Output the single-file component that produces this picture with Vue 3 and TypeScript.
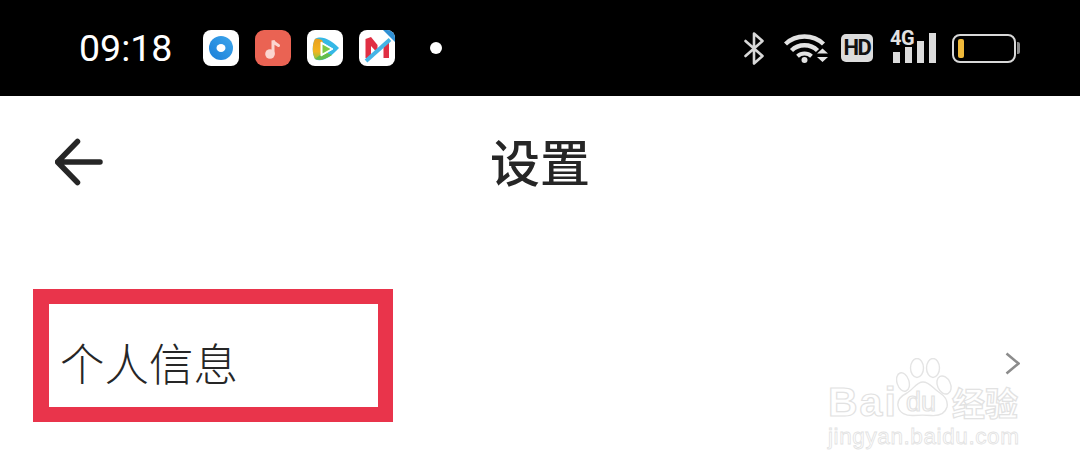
<script setup lang="ts">
const pageTitle = '设置';
const rowLabel = '个人信息';
</script>

<template>
  <div class="page">
    <div class="status-bar">
      <span class="status-bar__time">09:18</span>
      <div class="status-bar__apps">
        <svg class="app-icon" viewBox="0 0 36 36">
          <defs>
            <linearGradient id="disc" x1="0" y1="1" x2="1" y2="0">
              <stop offset="0" stop-color="#1a7ed8" />
              <stop offset="1" stop-color="#3da6ec" />
            </linearGradient>
          </defs>
          <rect width="36" height="36" rx="8" fill="#fff" />
          <circle cx="18" cy="18" r="12" fill="url(#disc)" />
          <ellipse cx="18" cy="18" rx="4.500" ry="4" fill="#fff" />
        </svg>
        <svg class="app-icon" viewBox="0 0 36 36">
          <rect width="36" height="36" rx="9" fill="#ea6353" />
          <circle cx="15" cy="24" r="4.800" fill="#fbd5cf" />
          <path d="M18 24V10.500c1 3 3.500 3.500 5.500 5" fill="none" stroke="#fbd5cf" stroke-width="3" stroke-linecap="round" />
        </svg>
        <svg class="app-icon" viewBox="0 0 36 36">
          <defs>
            <linearGradient id="wing" x1="0" y1="0" x2="0" y2="1">
              <stop offset="0" stop-color="#e8a020" />
              <stop offset="0.6" stop-color="#f3b41f" />
              <stop offset="1" stop-color="#8cc63f" />
            </linearGradient>
          </defs>
          <rect width="36" height="36" rx="8" fill="#fff" />
          <path d="M8 9C15 5 24 10 32 18 25 26 15 33 8 29 5 23 5 15 8 9z" fill="#35b8e6" />
          <path d="M8 9C5 15 5 23 8 29 13 31 18 29 22 26L15 10C12 9 9 8.500 8 9z" fill="url(#wing)" />
          <path d="M8 29C13 31 19 29 25 25L17 22z" fill="#63bd4b" />
          <path d="M14 12 26 19 14 26z" fill="#fff" stroke="#fff" stroke-width="1" stroke-linejoin="round" />
          <path d="M15.500 14.500 23.500 19 15.500 23.500z" fill="#7ccc46" />
        </svg>
        <svg class="app-icon" viewBox="0 0 36 36">
          <rect width="36" height="36" rx="8" fill="#fff" />
          <path d="M6.500 9 12 7 18.500 15 18.500 23 12 16V28H6.500zM23 16 30 9V28H24.500V17z" fill="#e02f43" />
          <path d="M7 31 31 9.500" stroke="#45b5e6" stroke-width="4" />
          <path d="M24 0h4a8 8 0 0 1 8 8v4z" fill="#2e8fd4" />
        </svg>
      </div>
      <span class="status-bar__dot"></span>
      <div class="status-bar__system">
        <svg class="icon-bluetooth" viewBox="0 0 21 33">
          <path d="M1.500 9 18.500 24 10 31.500V1.500L18.500 9 1.500 24" fill="none" stroke="#d8d8d8" stroke-width="2.600" stroke-linejoin="round" stroke-linecap="round" />
        </svg>
        <svg class="icon-wifi" viewBox="0 0 45 30">
          <path d="M1.500 11C12 1 29 1 39.500 11" fill="none" stroke="#e2e2e2" stroke-width="4.400" />
          <path d="M7.500 17.500C14.500 10.500 26.500 10.500 33.500 17.500" fill="none" stroke="#e2e2e2" stroke-width="4.400" />
          <path d="M13.500 23.200C17.500 19.500 23.500 19.500 27.500 23.200" fill="none" stroke="#e2e2e2" stroke-width="4" />
          <circle cx="20.500" cy="27" r="3" fill="#e2e2e2" />
          <path d="M33 20.500 38.500 15.500 44 20.500zM33 24 38.500 29 44 24z" fill="#e2e2e2" />
        </svg>
        <span class="status-bar__hd">HD</span>
        <div class="signal">
          <span class="signal__label">4G</span>
          <span class="signal__bar signal__bar--1"></span>
          <span class="signal__bar signal__bar--2"></span>
          <span class="signal__bar signal__bar--3"></span>
          <span class="signal__bar signal__bar--4"></span>
        </div>
        <div class="battery">
          <div class="battery__body"><span class="battery__level"></span></div>
          <span class="battery__nub"></span>
        </div>
      </div>
    </div>

    <header class="title-bar">
      <svg class="title-bar__back" viewBox="0 0 48 48">
        <path d="M45 24H4M22.500 3.500 2.500 24l20 20.500" fill="none" stroke="#262626" stroke-width="5.500" stroke-linecap="round" stroke-linejoin="round" />
      </svg>
      <h1 class="title-bar__text">{{ pageTitle }}</h1>
    </header>

    <div class="settings-row">
      <span class="settings-row__label">{{ rowLabel }}</span>
      <svg class="settings-row__chevron" viewBox="0 0 15 23">
        <path d="M1.500 1.500 13.500 11.500 1.500 21.500" fill="none" stroke="#8c8c8c" stroke-width="2.600" />
      </svg>
    </div>

    <div class="highlight-box"></div>

    <div class="watermark">
      <svg class="watermark__paw" viewBox="0 0 60 66">
        <g fill="#fff" stroke="#e4e4e4" stroke-width="1.400">
          <ellipse cx="7" cy="24" rx="6" ry="9.500" transform="rotate(-18 7 24)" />
          <ellipse cx="21" cy="10" rx="6.500" ry="9.500" />
          <ellipse cx="37" cy="10" rx="6.500" ry="9.500" />
          <ellipse cx="48" cy="27" rx="6.500" ry="9.500" transform="rotate(-25 48 27)" />
          <path d="M27 24C34 24 37 31 44 35 50 39 52 44 51 49 49 56 42 58 35 57.500 29 57 24 57 18 57.500 10 58 3 55 2 48 1 42 5 38 11 35 18 31 20 24 27 24z" />
        </g>
      </svg>
      <div class="watermark__top">
        <span class="watermark__bai">Bai</span>
        <span class="watermark__du">du</span>
        <span class="watermark__cn">经验</span>
      </div>
      <span class="watermark__url">jingyan.baidu.com</span>
    </div>
  </div>
</template>

<style scoped>
.page {
  position: relative;
  width: 1080px;
  height: 473px;
  overflow: hidden;
  background: #fff;
  font-family: "Roboto", "Noto Sans CJK SC", sans-serif;
}

.status-bar {
  display: flex;
  align-items: center;
  height: 96px;
  padding: 0 60px 0 79px;
  box-sizing: border-box;
  background: #000;
}

.status-bar__time {
  width: 94px;
  color: #fff;
  font-size: 37.500px;
  line-height: 96px;
  white-space: nowrap;
}

.status-bar__apps {
  display: flex;
  gap: 16px;
  margin-left: 30px;
}

.app-icon {
  display: block;
  width: 36px;
  height: 36px;
}

.status-bar__dot {
  width: 12px;
  height: 12px;
  margin-left: 35px;
  border-radius: 50%;
  background: #fff;
}

.status-bar__system {
  display: flex;
  align-items: center;
  margin-left: auto;
}

.icon-bluetooth {
  width: 21px;
  height: 33px;
}

.icon-wifi {
  width: 45px;
  height: 30px;
  margin-left: 19px;
}

.status-bar__hd {
  width: 32px;
  height: 28px;
  margin-left: 12px;
  border-radius: 5px;
  background: #dcdcdc;
  color: #111;
  font-size: 22px;
  font-weight: 700;
  line-height: 28px;
  text-align: center;
  letter-spacing: -1.500px;
}

.signal {
  position: relative;
  display: flex;
  align-items: flex-end;
  gap: 5px;
  width: 43px;
  height: 30px;
  margin-left: 20px;
}

.signal__label {
  position: absolute;
  top: -5px;
  left: -3px;
  color: #e2e2e2;
  font-size: 20px;
  font-weight: 700;
  line-height: 20px;
  letter-spacing: -0.5px;
}

.signal__bar {
  width: 7px;
  background: #dcdcdc;
}

.signal__bar--1 { height: 11px; }
.signal__bar--2 { height: 16px; }
.signal__bar--3 { height: 22px; }
.signal__bar--4 { height: 30px; }

.battery {
  display: flex;
  align-items: center;
  margin-left: 16px;
}

.battery__body {
  display: flex;
  align-items: center;
  width: 64px;
  height: 29px;
  padding-left: 4px;
  box-sizing: border-box;
  border: 2px solid #d8d8d8;
  border-radius: 8px;
}

.battery__level {
  width: 6px;
  height: 19px;
  border-radius: 2px;
  background: #f0b93a;
}

.battery__nub {
  width: 3px;
  height: 12px;
  margin-left: 1px;
  border-radius: 0 2px 2px 0;
  background: #8a8a8a;
}

.title-bar {
  position: relative;
  display: flex;
  align-items: center;
  justify-content: center;
  height: 138px;
}

.title-bar__back {
  position: absolute;
  top: 42px;
  left: 55px;
  width: 48px;
  height: 48px;
}

.title-bar__text {
  margin: 0;
  color: #262626;
  font-size: 50px;
  font-weight: 500;
  line-height: 60px;
}

.settings-row {
  display: flex;
  align-items: center;
  justify-content: space-between;
  height: 130px;
  margin-top: 66px;
  padding: 0 60px 0 60px;
  box-sizing: border-box;
}

.settings-row__label {
  margin-top: 2px;
  color: #262626;
  font-size: 44.500px;
  font-weight: 300;
  line-height: 60px;
}

.settings-row__chevron {
  width: 15px;
  height: 23px;
  margin-top: -3px;
}

.highlight-box {
  position: absolute;
  top: 289px;
  left: 33px;
  width: 329px;
  height: 103px;
  border-style: solid;
  border-color: #e9344b;
  border-width: 15px 15px 15px 16px;
}

.watermark {
  position: absolute;
  top: 358px;
  left: 828px;
  width: 196px;
  height: 96px;
}

.watermark__paw {
  position: absolute;
  top: 0;
  left: 68px;
  width: 60px;
  height: 66px;
}

.watermark__top {
  position: absolute;
  top: 24px;
  left: 0;
  display: flex;
  align-items: center;
  height: 40px;
  color: #fff;
  -webkit-text-stroke: 1.200px #e2e2e2;
}

.watermark__bai {
  width: 78px;
  font-family: "Liberation Sans", sans-serif;
  font-size: 41px;
  font-weight: 700;
  letter-spacing: 2px;
}

.watermark__du {
  width: 46px;
  font-family: "Liberation Sans", sans-serif;
  font-size: 27px;
  font-weight: 400;
}

.watermark__cn {
  font-family: "Noto Sans CJK SC", sans-serif;
  font-size: 33px;
  font-weight: 700;
  line-height: 40px;
}

.watermark__url {
  position: absolute;
  top: 65px;
  left: 0;
  color: #fff;
  font-family: "Liberation Sans", sans-serif;
  font-size: 22.500px;
  line-height: 28px;
  letter-spacing: 0.6px;
  white-space: nowrap;
  -webkit-text-stroke: 0.800px #e2e2e2;
}
</style>

<style>
body {
  margin: 0;
  background: #fff;
}
</style>
